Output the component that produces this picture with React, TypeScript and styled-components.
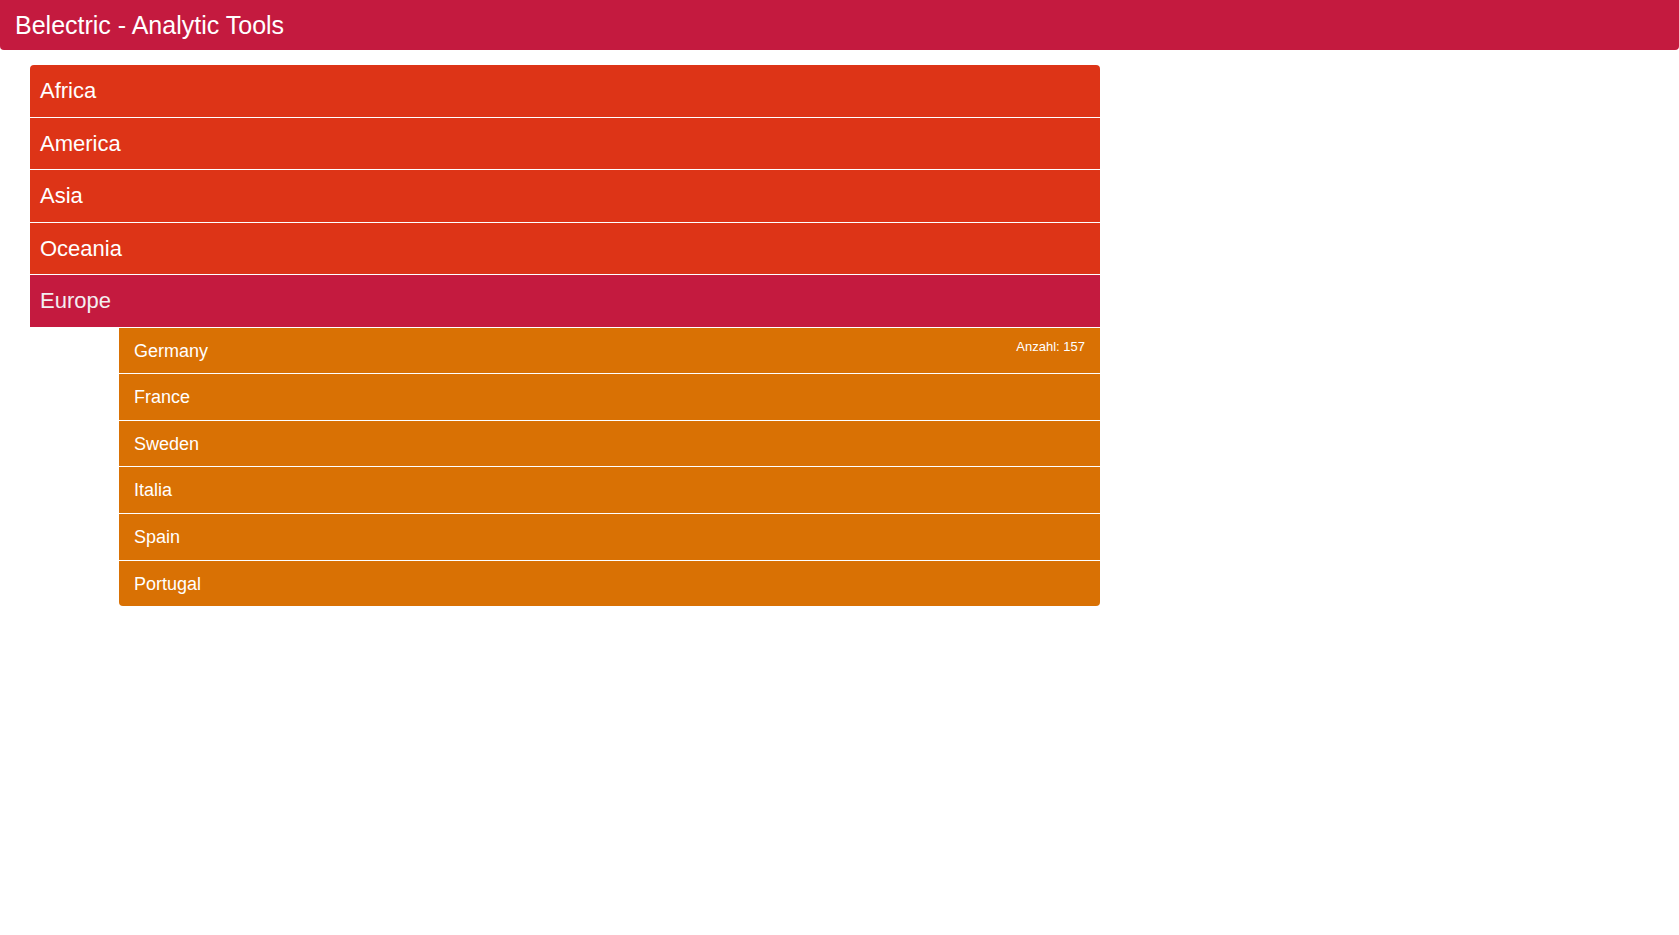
import React from "react";
import styled, { createGlobalStyle } from "styled-components";

const GlobalStyle = createGlobalStyle`
  html, body {
    margin: 0;
    padding: 0;
    background: #fff;
    font-family: "Liberation Sans", Arial, sans-serif;
  }
`;

const Header = styled.header`
  height: 50px;
  background: #c41a3f;
  border-radius: 0 0 4px 4px;
  color: #fff;
  font-size: 25px;
  line-height: 50px;
  padding-left: 15px;
`;

const Main = styled.main`
  padding: 15px 0 0 30px;
`;

const ContinentList = styled.div`
  width: 1070px;
  display: flex;
  flex-direction: column;
`;

const ContinentRow = styled.div<{ $active?: boolean }>`
  box-sizing: border-box;
  height: 52.5px;
  border-top: 1px solid #fff;
  background: ${(p) => (p.$active ? "#c41a3f" : "#dd3417")};
  color: ${(p) => (p.$active ? "#f3eef0" : "#fff")};
  font-size: 22px;
  line-height: 51px;
  padding-left: 10px;
  cursor: pointer;

  &:first-child {
    border-top: none;
    height: 51.5px;
    border-radius: 4px 4px 0 0;
  }
`;

const CountryList = styled.div`
  width: 981px;
  margin-left: 89px;
  display: flex;
  flex-direction: column;
  border-radius: 0 0 4px 4px;
  overflow: hidden;
`;

const CountryRow = styled.div`
  position: relative;
  box-sizing: border-box;
  height: 46.67px;
  border-top: 1px solid #fff;
  background: #d97104;
  color: #fff;
  font-size: 18px;
  line-height: 46px;
  padding-left: 15px;
  cursor: pointer;
`;

const Count = styled.span`
  position: absolute;
  top: 10px;
  right: 15px;
  font-size: 13px;
  line-height: 18px;
`;

const continents = ["Africa", "America", "Asia", "Oceania", "Europe"];
const countries = [
  { name: "Germany", count: 157 },
  { name: "France" },
  { name: "Sweden" },
  { name: "Italia" },
  { name: "Spain" },
  { name: "Portugal" },
];

export default function App(): JSX.Element {
  const selected = "Europe";
  return (
    <>
      <GlobalStyle />
      <Header>Belectric - Analytic Tools</Header>
      <Main>
        <ContinentList>
          {continents.map((c) => (
            <ContinentRow key={c} $active={c === selected}>
              {c}
            </ContinentRow>
          ))}
        </ContinentList>
        <CountryList>
          {countries.map((c) => (
            <CountryRow key={c.name}>
              {c.name}
              {c.count != null && <Count>Anzahl: {c.count}</Count>}
            </CountryRow>
          ))}
        </CountryList>
      </Main>
    </>
  );
}
